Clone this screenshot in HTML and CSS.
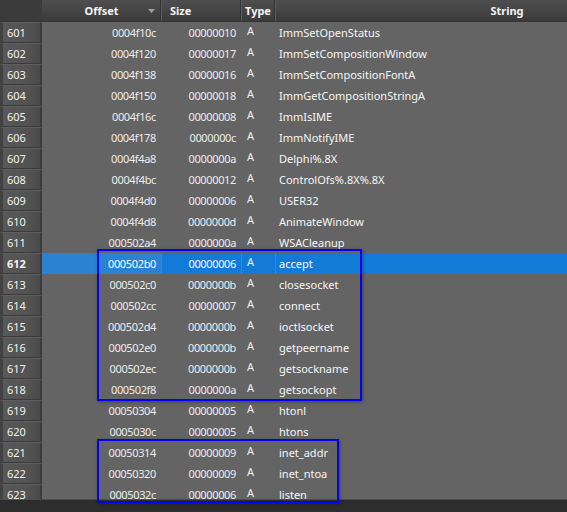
FILE: index.html
```html
<!DOCTYPE html>
<html>
<head>
<meta charset="utf-8">
<link rel="stylesheet" href="styles.css">
</head>
<body>
<div class="view">
  <div class="grid">
    <div class="head">
      <div class="h corner"></div>
      <div class="h c-off"><span class="htxt">Offset</span><svg class="sort" width="7" height="4" viewBox="0 0 7 4"><polygon points="0,0 7,0 3.5,4" fill="#a0a0a0"/></svg></div>
      <div class="h c-size"><span class="htxt left">Size</span></div>
      <div class="h c-type"><span class="htxt left">Type</span></div>
      <div class="h c-str"><span class="htxt">String</span></div>
    </div>
    <div class="body">
      <div class="row"><div class="num">601</div><div class="c c-off">0004f10c</div><div class="c c-size">00000010</div><div class="c c-type"><span class="a">A</span></div><div class="c c-str">ImmSetOpenStatus</div></div>
      <div class="row"><div class="num">602</div><div class="c c-off">0004f120</div><div class="c c-size">00000017</div><div class="c c-type"><span class="a">A</span></div><div class="c c-str">ImmSetCompositionWindow</div></div>
      <div class="row"><div class="num">603</div><div class="c c-off">0004f138</div><div class="c c-size">00000016</div><div class="c c-type"><span class="a">A</span></div><div class="c c-str">ImmSetCompositionFontA</div></div>
      <div class="row"><div class="num">604</div><div class="c c-off">0004f150</div><div class="c c-size">00000018</div><div class="c c-type"><span class="a">A</span></div><div class="c c-str">ImmGetCompositionStringA</div></div>
      <div class="row"><div class="num">605</div><div class="c c-off">0004f16c</div><div class="c c-size">00000008</div><div class="c c-type"><span class="a">A</span></div><div class="c c-str">ImmIsIME</div></div>
      <div class="row"><div class="num">606</div><div class="c c-off">0004f178</div><div class="c c-size">0000000c</div><div class="c c-type"><span class="a">A</span></div><div class="c c-str">ImmNotifyIME</div></div>
      <div class="row"><div class="num">607</div><div class="c c-off">0004f4a8</div><div class="c c-size">0000000a</div><div class="c c-type"><span class="a">A</span></div><div class="c c-str">Delphi%.8X</div></div>
      <div class="row"><div class="num">608</div><div class="c c-off">0004f4bc</div><div class="c c-size">00000012</div><div class="c c-type"><span class="a">A</span></div><div class="c c-str">ControlOfs%.8X%.8X</div></div>
      <div class="row"><div class="num">609</div><div class="c c-off">0004f4d0</div><div class="c c-size">00000006</div><div class="c c-type"><span class="a">A</span></div><div class="c c-str">USER32</div></div>
      <div class="row"><div class="num">610</div><div class="c c-off">0004f4d8</div><div class="c c-size">0000000d</div><div class="c c-type"><span class="a">A</span></div><div class="c c-str">AnimateWindow</div></div>
      <div class="row"><div class="num">611</div><div class="c c-off">000502a4</div><div class="c c-size">0000000a</div><div class="c c-type"><span class="a">A</span></div><div class="c c-str">WSACleanup</div></div>
      <div class="row sel"><div class="num">612</div><div class="c c-off">000502b0</div><div class="c c-size">00000006</div><div class="c c-type"><span class="a">A</span></div><div class="c c-str">accept</div></div>
      <div class="row"><div class="num">613</div><div class="c c-off">000502c0</div><div class="c c-size">0000000b</div><div class="c c-type"><span class="a">A</span></div><div class="c c-str">closesocket</div></div>
      <div class="row"><div class="num">614</div><div class="c c-off">000502cc</div><div class="c c-size">00000007</div><div class="c c-type"><span class="a">A</span></div><div class="c c-str">connect</div></div>
      <div class="row"><div class="num">615</div><div class="c c-off">000502d4</div><div class="c c-size">0000000b</div><div class="c c-type"><span class="a">A</span></div><div class="c c-str">ioctlsocket</div></div>
      <div class="row"><div class="num">616</div><div class="c c-off">000502e0</div><div class="c c-size">0000000b</div><div class="c c-type"><span class="a">A</span></div><div class="c c-str">getpeername</div></div>
      <div class="row"><div class="num">617</div><div class="c c-off">000502ec</div><div class="c c-size">0000000b</div><div class="c c-type"><span class="a">A</span></div><div class="c c-str">getsockname</div></div>
      <div class="row"><div class="num">618</div><div class="c c-off">000502f8</div><div class="c c-size">0000000a</div><div class="c c-type"><span class="a">A</span></div><div class="c c-str">getsockopt</div></div>
      <div class="row"><div class="num">619</div><div class="c c-off">00050304</div><div class="c c-size">00000005</div><div class="c c-type"><span class="a">A</span></div><div class="c c-str">htonl</div></div>
      <div class="row"><div class="num">620</div><div class="c c-off">0005030c</div><div class="c c-size">00000005</div><div class="c c-type"><span class="a">A</span></div><div class="c c-str">htons</div></div>
      <div class="row"><div class="num">621</div><div class="c c-off">00050314</div><div class="c c-size">00000009</div><div class="c c-type"><span class="a">A</span></div><div class="c c-str">inet_addr</div></div>
      <div class="row"><div class="num">622</div><div class="c c-off">00050320</div><div class="c c-size">00000009</div><div class="c c-type"><span class="a">A</span></div><div class="c c-str">inet_ntoa</div></div>
      <div class="row"><div class="num">623</div><div class="c c-off">0005032c</div><div class="c c-size">00000006</div><div class="c c-type"><span class="a">A</span></div><div class="c c-str">listen</div></div>
    </div>
    <div class="hscroll"></div>
  </div>
  <div class="mark mark1"></div>
  <div class="mark mark2"></div>
</div>
</body>
</html>
```
FILE: styles.css
```css
* { box-sizing: border-box; }
html, body { margin: 0; padding: 0; background: #2d2d2d; }
body {
  font-family: "Noto Sans", "Open Sans", sans-serif;
  font-size: 11px;
  color: #ececec;
}
.view { position: relative; width: 567px; height: 512px; overflow: hidden; }
.grid { width: 567px; height: 512px; display: flex; flex-direction: column; background: #646464; overflow: hidden; }

.head {
  display: flex;
  height: 22px;
  flex: 0 0 22px;
  background: linear-gradient(to bottom, #4e4e4e 0%, #464646 45%, #3a3a3a 100%);
  border-bottom: 1px solid #353535;
}
.h {
  position: relative;
  display: flex;
  align-items: center;
  justify-content: center;
  font-weight: bold;
  color: #f4f4f4;
  border-right: 1px solid #5c5c5c;
  box-shadow: inset -1px 0 0 #333;
  padding-bottom: 1px;
}
.h.corner { flex: 0 0 42px; background: #3b3b3b; border-right: 1px solid #3b3b3b; box-shadow: none; }
.h.c-off { flex: 0 0 120px; }
.h.c-size { flex: 0 0 80px; justify-content: flex-start; padding-left: 8px; }
.h.c-type { flex: 0 0 34px; justify-content: flex-start; padding-left: 3px; }
.h.c-str { flex: 0 0 462px; border-right: none; box-shadow: none; }
.sort { position: absolute; right: 6px; top: 9px; }

.body { flex: 0 0 477px; overflow: hidden; }
.row { display: flex; height: 21px; align-items: stretch; }
.num {
  flex: 0 0 42px;
  display: flex;
  align-items: center;
  padding-left: 4px;
  color: #f2f2f2;
  background: linear-gradient(to right, #585858 0%, #525252 70%, #4a4a4a 100%);
  border-left: 3px solid #424242;
  border-right: 2px solid #3c3c3c;
  border-bottom: 1px solid #3a3a3a;
  border-top: 1px solid #5e5e5e;
}
.c { display: flex; align-items: center; white-space: nowrap; }
.c.c-off { flex: 0 0 120px; justify-content: flex-end; padding-right: 5px; letter-spacing: -0.35px; border-right: 1px solid transparent; }
.c.c-size { flex: 0 0 80px; justify-content: flex-end; padding-right: 5px; letter-spacing: -0.35px; border-right: 1px solid transparent; }
.c.c-type { flex: 0 0 34px; padding-left: 5px; align-items: flex-start; border-right: 1px solid transparent; }
.c.c-str { flex: 0 0 462px; padding-left: 3px; color: #f6f6f6; }
.a { font-size: 11px; line-height: 1; margin-top: 3px; color: #efefef; }

.row.sel .c { background: #127bd8; border-right-color: #3b86c8; color: #fbfbfb; }
.row.sel .c.c-off { background: #2a82d2; }
.row.sel .num { font-weight: bold; }

.hscroll { flex: 1 1 auto; background: #2d2d2d; border-top: 1px solid #4c4c4c; }

.mark {
  position: absolute;
  border: 2px solid #0000f5;
  box-shadow: 1px 1px 3px rgba(0,0,0,0.35);
}
.mark1 { left: 97px; top: 249px; width: 265px; height: 152px; }
.mark2 { left: 97px; top: 439px; width: 242px; height: 64px; }
```
